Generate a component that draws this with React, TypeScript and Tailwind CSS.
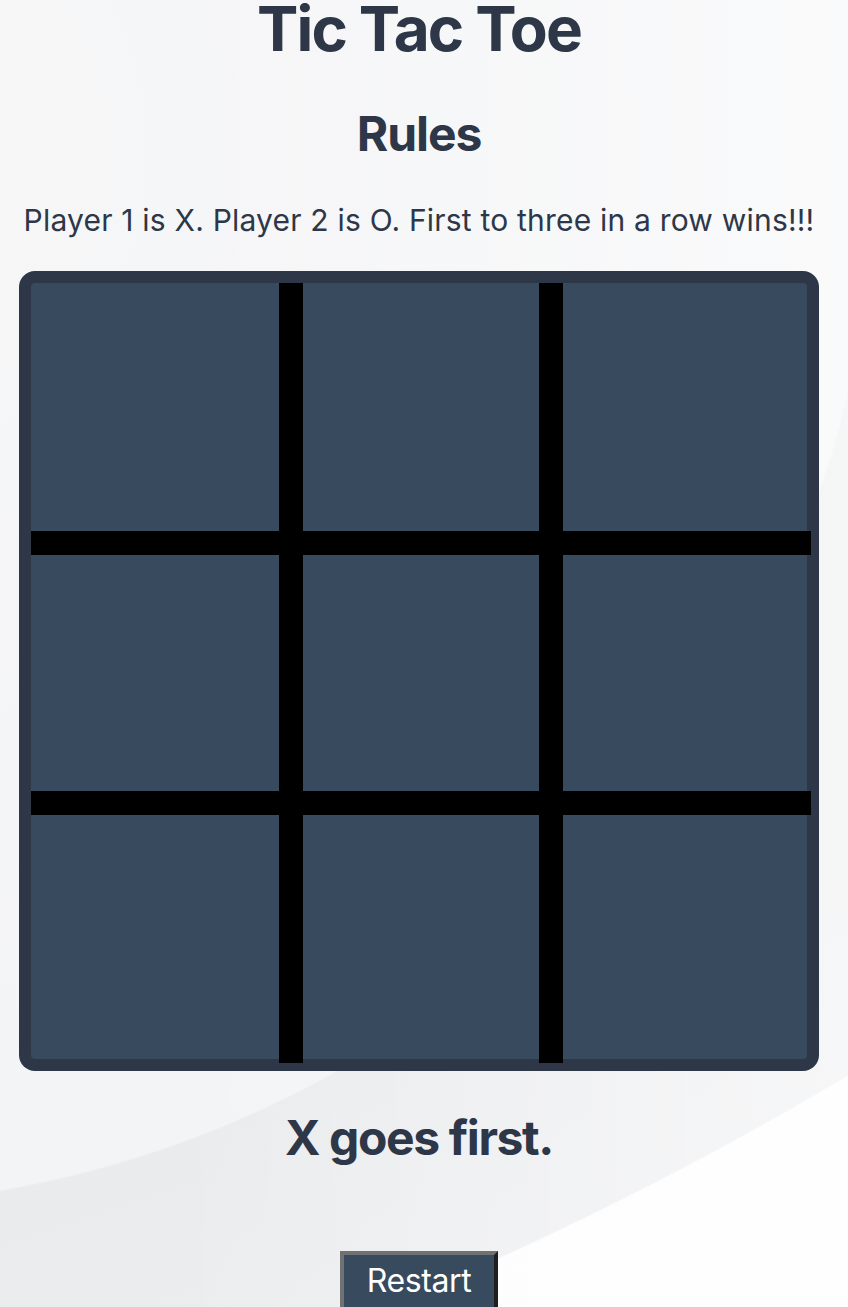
import { useState } from "react";

type Cell = "X" | "O" | null;

// border classes per cell, row-major; lines only between cells
const cellBorders = [
  "border-r-[12px] border-b-[12px]",
  "border-l-[12px] border-r-[12px] border-b-[12px]",
  "border-l-[12px] border-b-[12px]",
  "border-t-[12px] border-r-[12px] border-b-[12px]",
  "border-[12px]",
  "border-t-[12px] border-l-[12px] border-b-[12px]",
  "border-t-[12px] border-r-[12px]",
  "border-t-[12px] border-l-[12px] border-r-[12px]",
  "border-t-[12px] border-l-[12px]",
];

const lines = [
  [0, 1, 2],
  [3, 4, 5],
  [6, 7, 8],
  [0, 3, 6],
  [1, 4, 7],
  [2, 5, 8],
  [0, 4, 8],
  [2, 4, 6],
];

function winnerOf(board: Cell[]) {
  for (const [a, b, c] of lines) {
    if (board[a] && board[a] === board[b] && board[a] === board[c]) return board[a];
  }
  return null;
}

export default function App() {
  const [board, setBoard] = useState<Cell[]>(Array(9).fill(null));
  const [xNext, setXNext] = useState(true);

  const winner = winnerOf(board);
  const moves = board.filter(Boolean).length;
  let status = "X goes first.";
  if (winner) status = `${winner} wins!`;
  else if (moves === 9) status = "It's a draw.";
  else if (moves > 0) status = `${xNext ? "X" : "O"}'s turn.`;

  const play = (i: number) => {
    if (board[i] || winner) return;
    const next = board.slice();
    next[i] = xNext ? "X" : "O";
    setBoard(next);
    setXNext(!xNext);
  };

  return (
    <div className="min-h-screen w-full overflow-hidden bg-[#ecedef] bg-[linear-gradient(90deg,rgba(255,255,255,0)_20%,rgba(255,255,255,0.55)_100%),radial-gradient(circle_at_-179px_151px,#f7f7f8_0px,#f3f4f6_1054px,transparent_1056px),radial-gradient(circle_at_-974px_-1984px,#eaebed_3300px,#ecedef_3560px,#fdfdfe_3562px)] font-['Inter',sans-serif] text-[#2d3748]">
      <div className="flex w-[838px] flex-col items-center text-center">
        <h1 className="text-[62px] font-bold leading-[58px] tracking-[-1.9px]">Tic Tac Toe</h1>
        <h2 className="mt-[52px] text-[48px] font-bold leading-[48px] tracking-[-1.1px]">Rules</h2>
        <p className="mt-[44px] text-[30px] leading-[36px] tracking-[0.2px]">
          Player 1 is X. Player 2 is O. First to three in a row wins!!!
        </p>

        <div className="mt-[33px] h-[800px] w-[800px] rounded-2xl bg-[#2d3748] p-3">
          <div className="h-[776px] w-[776px] rounded bg-[#384a5e]">
            <div className="grid w-[780px] grid-cols-[repeat(3,260px)] grid-rows-[repeat(3,260px)]">
              {board.map((v, i) => (
                <button
                  key={i}
                  className={`flex items-center justify-center border-black text-[160px] font-bold text-white ${cellBorders[i]}`}
                  onClick={() => play(i)}
                >
                  {v}
                </button>
              ))}
            </div>
          </div>
        </div>

        <h2 className="mt-[43px] text-[48px] font-bold leading-[48px] tracking-[-1.4px]">{status}</h2>

        <button
          className="mt-[89px] border-4 border-t-[#717171] border-l-[#717171] border-r-[#1f1f1f] border-b-[#1f1f1f] bg-[#384a5e] px-[23px] py-[2px] text-[32px] leading-[48px] tracking-[-0.4px] text-white"
          onClick={() => {
            setBoard(Array(9).fill(null));
            setXNext(true);
          }}
        >
          Restart
        </button>
      </div>
    </div>
  );
}
